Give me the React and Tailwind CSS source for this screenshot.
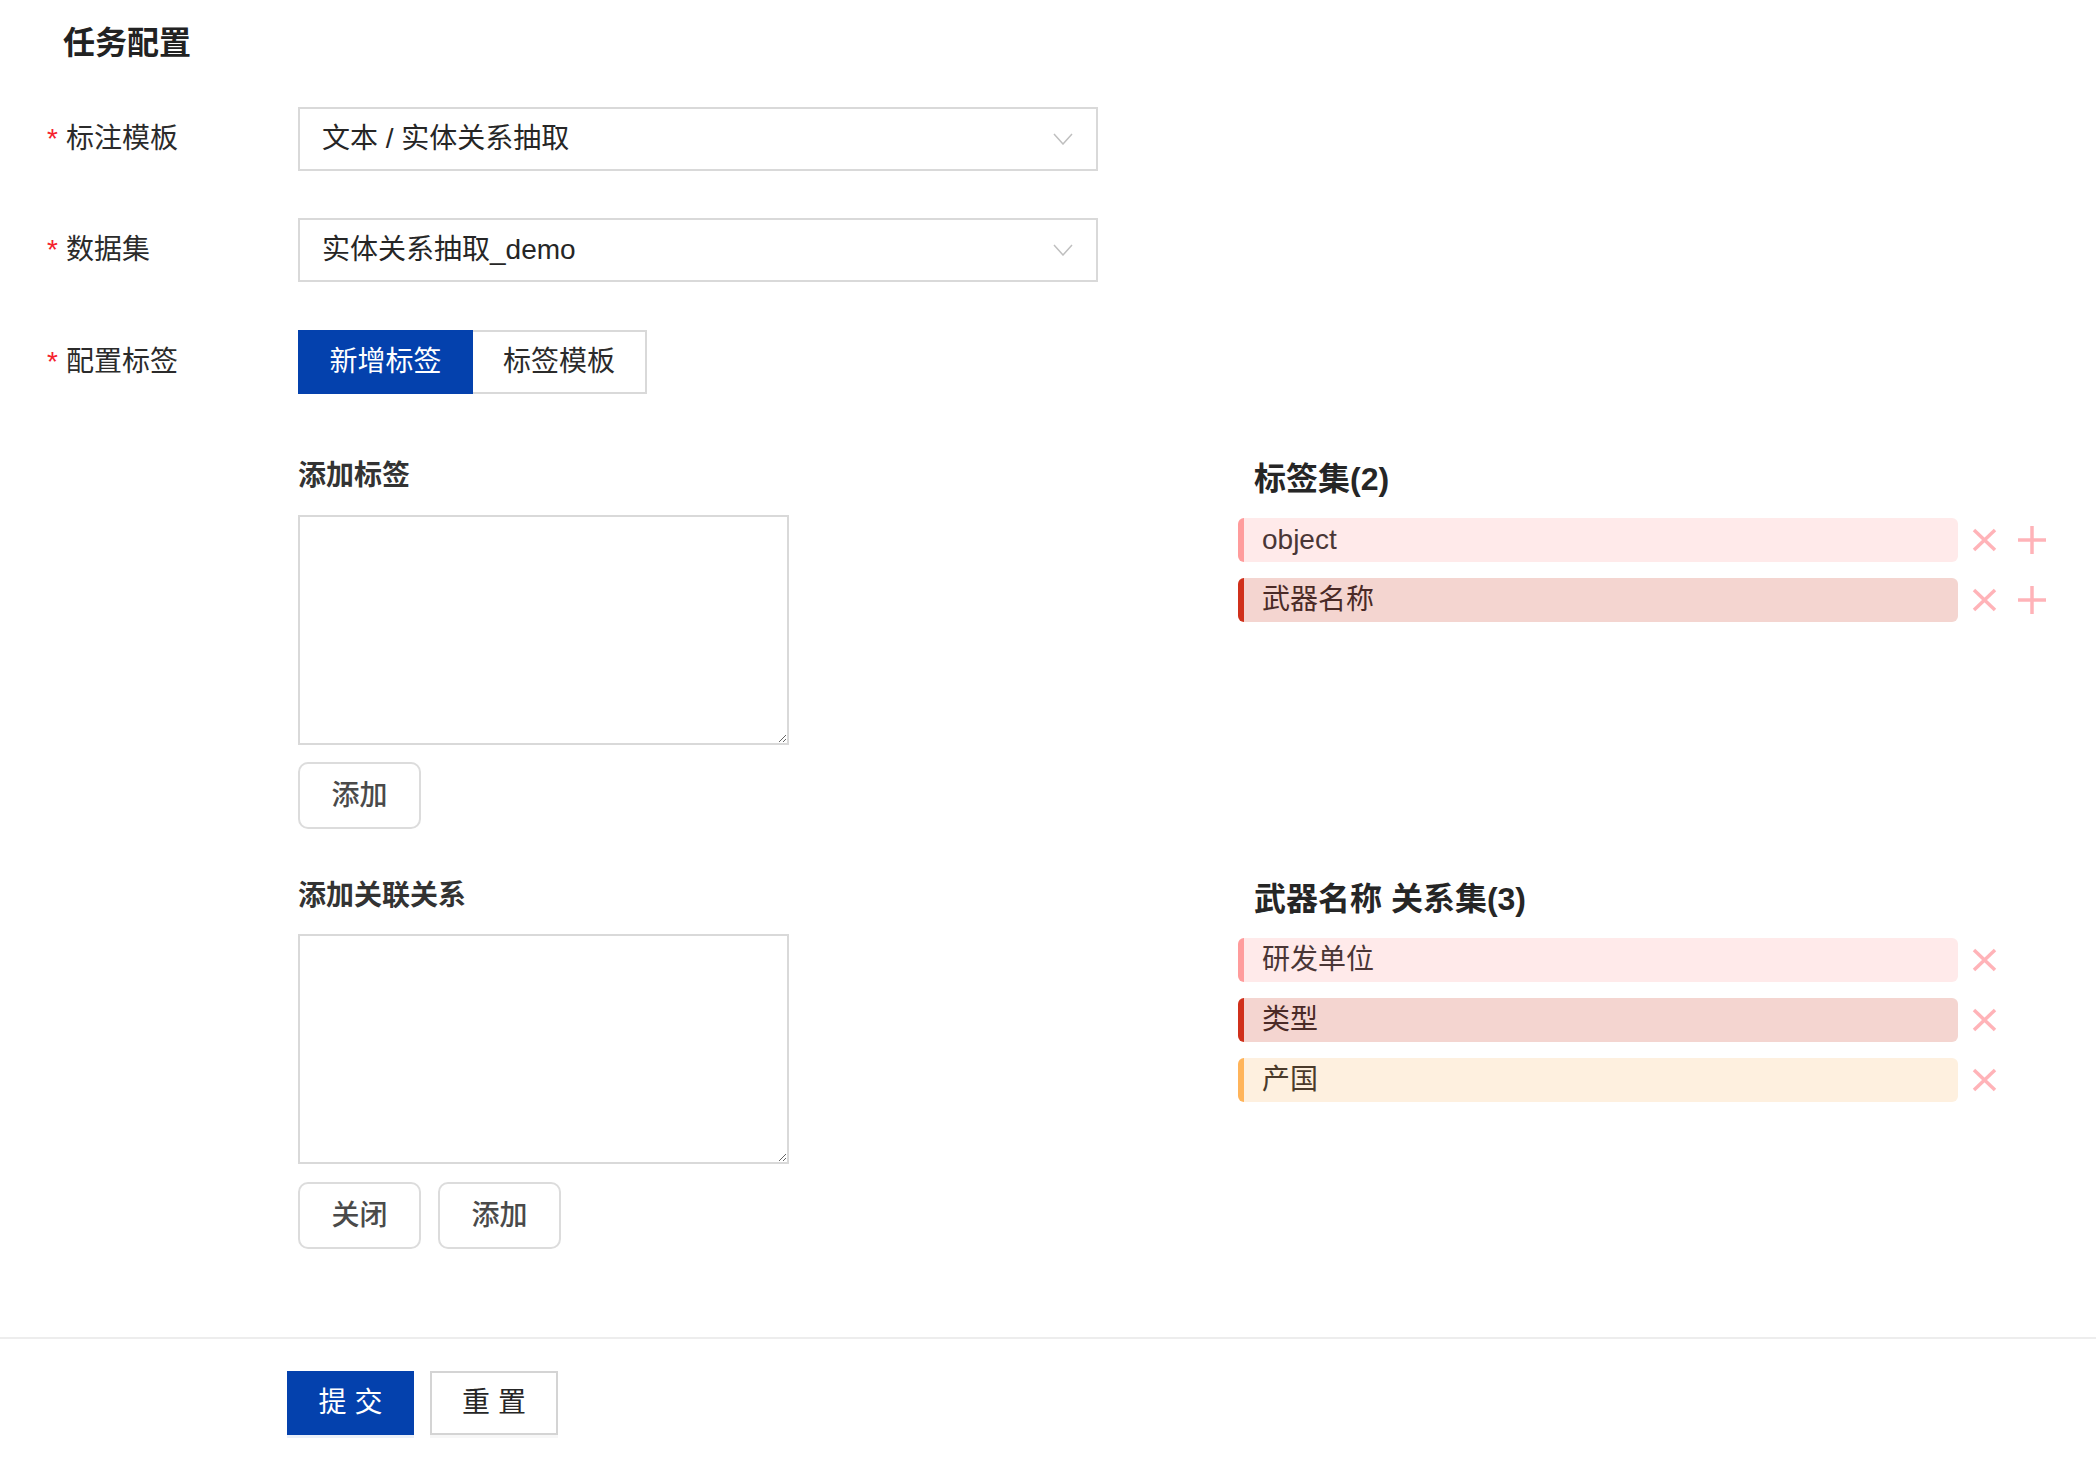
import React, { useState } from "react";

const TAGS = [
  { name: "object", bar: "border-[#ff9c9c]", bg: "bg-[#ffeaea]", text: "text-[#4a3636]" },
  { name: "武器名称", bar: "border-[#d0301b]", bg: "bg-[#f4d5d0]", text: "text-[#4a2a26]" },
];

const RELATIONS = [
  { name: "研发单位", bar: "border-[#ff9c9c]", bg: "bg-[#ffeaea]", text: "text-[#4a3636]" },
  { name: "类型", bar: "border-[#d0301b]", bg: "bg-[#f4d5d0]", text: "text-[#4a2a26]" },
  { name: "产国", bar: "border-[#ffb45a]", bg: "bg-[#fef0df]", text: "text-[#4a3a2a]" },
];

const Chevron = () => (
  <svg width="20" height="12" viewBox="0 0 20 12" fill="none">
    <polyline points="1,1 10,11 19,1" stroke="#bfbfbf" strokeWidth="1.5" />
  </svg>
);

const XIcon = () => (
  <svg width="25" height="24" viewBox="0 0 25 24" fill="none">
    <line x1="2" y1="2" x2="23" y2="22" stroke="#ffb3b8" strokeWidth="3.5" />
    <line x1="23" y1="2" x2="2" y2="22" stroke="#ffb3b8" strokeWidth="3.5" />
  </svg>
);

const PlusIcon = () => (
  <svg width="28" height="28" viewBox="0 0 28 28" fill="none">
    <line x1="14" y1="0" x2="14" y2="28" stroke="#ffb3b8" strokeWidth="3.5" />
    <line x1="0" y1="14" x2="28" y2="14" stroke="#ffb3b8" strokeWidth="3.5" />
  </svg>
);

const FormRow = ({ label, children }) => (
  <div className="flex items-center pl-[47px]">
    <div className="flex w-[251px] items-center text-[28px] text-[#2b2b2b]">
      <span className="mr-[8px] text-[#f5222d]">*</span>
      {label}
    </div>
    {children}
  </div>
);

const Select = ({ value }) => (
  <div className="flex h-[64px] w-[800px] items-center justify-between border-2 border-[#d9d9d9] pl-[22px] pr-[23px] text-[28px] text-[#262626]">
    <span>{value}</span>
    <Chevron />
  </div>
);

const SmallButton = ({ children }) => (
  <button className="h-[67px] w-[123px] rounded-[10px] border-2 border-[#dcdcdc] bg-white text-[28px] font-medium text-[#4a4a4a]">
    {children}
  </button>
);

const ItemRow = ({ item, withAdd }) => (
  <div className="flex items-center">
    <div
      className={`flex h-[44px] w-[720px] items-center rounded-[6px] border-l-[6px] pl-[18px] text-[28px] ${item.bar} ${item.bg} ${item.text}`}
    >
      {item.name}
    </div>
    <button className="ml-[14px] flex items-center">
      <XIcon />
    </button>
    {withAdd && (
      <button className="ml-[21px] flex items-center">
        <PlusIcon />
      </button>
    )}
  </div>
);

const App = () => {
  const [mode, setMode] = useState("new");

  return (
    <div className="min-h-screen w-full bg-white font-['Liberation_Sans','Noto_Sans_CJK_SC',sans-serif]">
      <div className="pl-[63px] pt-[19px] text-[32px] font-bold leading-[48px] text-[#222]">
        任务配置
      </div>

      <div className="mt-[40px] flex flex-col">
        <FormRow label="标注模板">
          <Select value="文本 / 实体关系抽取" />
        </FormRow>
        <div className="mt-[47px]">
          <FormRow label="数据集">
            <Select value="实体关系抽取_demo" />
          </FormRow>
        </div>
        <div className="mt-[48px]">
          <FormRow label="配置标签">
            <div className="flex h-[64px]">
              <button
                onClick={() => setMode("new")}
                className="h-[64px] w-[175px] bg-[#0441ad] text-[28px] text-white"
              >
                新增标签
              </button>
              <button
                onClick={() => setMode("tpl")}
                className="h-[64px] w-[174px] border-2 border-l-0 border-[#d9d9d9] bg-white text-[28px] text-[#2b2b2b]"
              >
                标签模板
              </button>
            </div>
          </FormRow>
        </div>
      </div>

      <div className="mt-[61px] pl-[298px]">
        {/* 标签 */}
        <div className="flex">
          <div className="w-[940px]">
            <div className="text-[28px] font-semibold leading-[42px] text-[#333]">添加标签</div>
            <textarea className="mt-[18px] block h-[230px] w-[491px] resize border-2 border-[#d9d9d9] outline-none" />
            <div className="mt-[17px]">
              <SmallButton>添加</SmallButton>
            </div>
          </div>
          <div>
            <div className="pl-[16px] text-[32px] font-bold leading-[48px] text-[#262626]">标签集(2)</div>
            <div className="mt-[15px] flex flex-col gap-[16px]">
              {TAGS.map((t) => (
                <ItemRow key={t.name} item={t} withAdd />
              ))}
            </div>
          </div>
        </div>

        {/* 关系 */}
        <div className="mt-[46px] flex">
          <div className="w-[940px]">
            <div className="text-[28px] font-semibold leading-[42px] text-[#333]">添加关联关系</div>
            <textarea className="mt-[17px] block h-[230px] w-[491px] resize border-2 border-[#d9d9d9] outline-none" />
            <div className="mt-[18px] flex gap-[17px]">
              <SmallButton>关闭</SmallButton>
              <SmallButton>添加</SmallButton>
            </div>
          </div>
          <div>
            <div className="pl-[16px] text-[32px] font-bold leading-[48px] text-[#262626]">武器名称 关系集(3)</div>
            <div className="mt-[15px] flex flex-col gap-[16px]">
              {RELATIONS.map((r) => (
                <ItemRow key={r.name} item={r} />
              ))}
            </div>
          </div>
        </div>
      </div>

      <div className="mt-[88px] h-[2px] w-full bg-[#ededed]" />

      <div className="mt-[32px] flex gap-[16px] pl-[287px]">
        <button className="h-[64px] w-[127px] bg-[#0441ad] text-[28px] text-white shadow-[0_3px_0_rgba(5,65,173,0.08)]">
          提 交
        </button>
        <button className="h-[64px] w-[128px] border-2 border-[#d4d4d4] bg-white text-[28px] text-[#262626] shadow-[0_3px_0_rgba(0,0,0,0.03)]">
          重 置
        </button>
      </div>
    </div>
  );
};

export default App;
